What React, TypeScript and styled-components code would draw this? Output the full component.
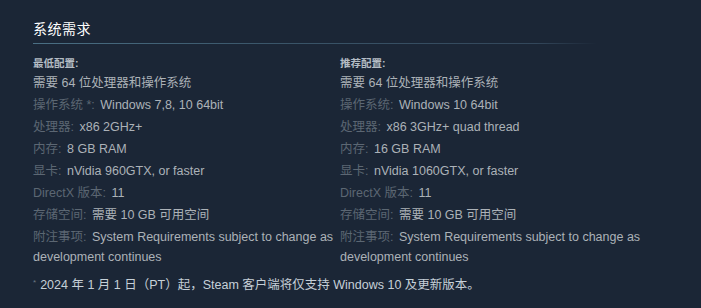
import React from 'react';
import styled, { createGlobalStyle } from 'styled-components';

const GlobalStyle = createGlobalStyle`
  html, body {
    margin: 0;
    padding: 0;
    background: #1b2636;
  }
  body {
    font-family: Arial, "Liberation Sans", "Noto Sans CJK SC", sans-serif;
  }
`;

interface Req {
  label: string;
  value: string;
}

interface Spec {
  heading: string;
  first: string;
  rows: Req[];
}

const minimum: Spec = {
  heading: '最低配置:',
  first: '需要 64 位处理器和操作系统',
  rows: [
    { label: '操作系统 *:', value: 'Windows 7,8, 10 64bit' },
    { label: '处理器:', value: 'x86 2GHz+' },
    { label: '内存:', value: '8 GB RAM' },
    { label: '显卡:', value: 'nVidia 960GTX, or faster' },
    { label: 'DirectX 版本:', value: '11' },
    { label: '存储空间:', value: '需要 10 GB 可用空间' },
    { label: '附注事项:', value: 'System Requirements subject to change as development continues' },
  ],
};

const recommended: Spec = {
  heading: '推荐配置:',
  first: '需要 64 位处理器和操作系统',
  rows: [
    { label: '操作系统:', value: 'Windows 10 64bit' },
    { label: '处理器:', value: 'x86 3GHz+ quad thread' },
    { label: '内存:', value: '16 GB RAM' },
    { label: '显卡:', value: 'nVidia 1060GTX, or faster' },
    { label: 'DirectX 版本:', value: '11' },
    { label: '存储空间:', value: '需要 10 GB 可用空间' },
    { label: '附注事项:', value: 'System Requirements subject to change as development continues' },
  ],
};

// Styled Components
const Section = styled.section`
  padding: 21px 0 0 33px;
  width: 612px;
`;

const Title = styled.h2`
  margin: 0;
  padding-bottom: 5px;
  font-size: 14px;
  font-weight: normal;
  line-height: 17px;
  letter-spacing: 0.5px;
  color: #ffffff;
  border-bottom: 1px solid transparent;
  border-image: linear-gradient(to right, #4a6f84 0%, #3a5569 40%, #33475b 82%, rgba(27, 38, 54, 0) 92%) 1;
`;

const Columns = styled.div`
  display: grid;
  grid-template-columns: 302px 302px;
  gap: 5px;
  margin-top: 11px;
`;

const Column = styled.div`
  display: flex;
  flex-direction: column;
`;

const Heading = styled.div`
  font-size: 10.5px;
  font-weight: bold;
  line-height: 16px;
  color: #b4bcc4;
  margin-bottom: 2px;
`;

const List = styled.ul`
  list-style: none;
  margin: 0;
  padding: 0;
`;

const Item = styled.li`
  font-size: 12.5px;
  line-height: 20px;
  margin-bottom: 2px;
  color: #acb2b8;
`;

const Label = styled.span`
  color: #5c6773;
  margin-right: 5.5px;
`;

const Footnote = styled.p`
  margin: 4px 0 0;
  font-size: 12.5px;
  line-height: 20px;
  color: #c6d0d8;
`;

const Star = styled.sup`
  font-size: 8px;
  color: #6d7783;
  margin-right: 4px;
  vertical-align: 4px;
`;

const SpecColumn: React.FC<{ spec: Spec }> = ({ spec }) => (
  <Column>
    <Heading>{spec.heading}</Heading>
    <List>
      <Item>{spec.first}</Item>
      {spec.rows.map((row) => (
        <Item key={row.label}>
          <Label>{row.label}</Label>
          {row.value}
        </Item>
      ))}
    </List>
  </Column>
);

export default function App() {
  return (
    <>
      <GlobalStyle />
      <Section>
        <Title>系统需求</Title>
        <Columns>
          <SpecColumn spec={minimum} />
          <SpecColumn spec={recommended} />
        </Columns>
        <Footnote>
          <Star>*</Star>2024 年 1 月 1 日（PT）起，Steam 客户端将仅支持 Windows 10 及更新版本。
        </Footnote>
      </Section>
    </>
  );
}
